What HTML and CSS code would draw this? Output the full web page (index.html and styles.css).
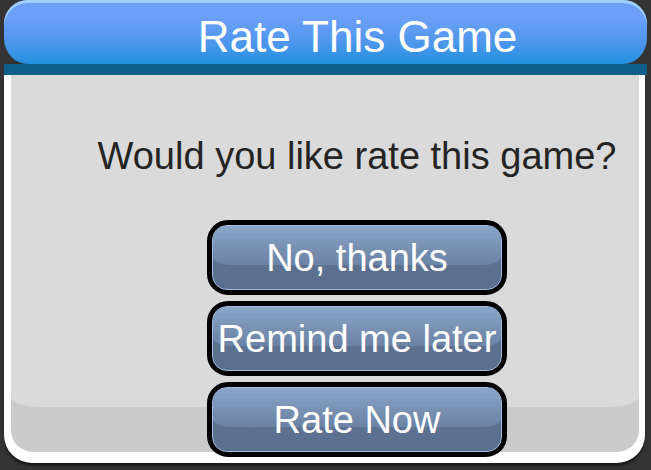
FILE: index.html
```html
<!DOCTYPE html>
<html>
<head>
<meta charset="utf-8">
<link rel="stylesheet" href="styles.css">
</head>
<body>
<div class="dialog">
  <div class="header"><span class="title">Rate This Game</span></div>
  <div class="band"></div>
  <div class="frame">
    <div class="panel">
      <p class="question">Would you like rate this game?</p>
      <div class="buttons">
        <button class="btn"><span class="face"><span class="label">No, thanks</span></span></button>
        <button class="btn"><span class="face"><span class="label">Remind me later</span></span></button>
        <button class="btn"><span class="face"><span class="label">Rate Now</span></span></button>
      </div>
    </div>
  </div>
</div>
</body>
</html>
```
FILE: styles.css
```css
html, body {
  margin: 0;
  padding: 0;
  background: #333333;
  width: 651px;
  height: 470px;
  overflow: hidden;
  font-family: "Liberation Sans", Arial, sans-serif;
}

.dialog {
  margin-left: 4px;
  width: 643px;
  display: flex;
  flex-direction: column;
}

.header {
  height: 64px;
  box-sizing: border-box;
  padding-top: 11px;
  padding-left: 64px;
  display: flex;
  align-items: center;
  justify-content: center;
  border-radius: 24px 24px 24px 24px / 24px 24px 26px 26px;
  background: linear-gradient(#6f9ff9 0%, #6a9ff7 30%, #4f97ec 65%, #2390e0 100%);
  box-shadow: inset 0 3px 0 #9fd0fc;
}

.title {
  color: #ffffff;
  font-size: 44px;
  line-height: 1.15;
}

.band {
  height: 11px;
  background: #0e5f8c;
}

.frame {
  width: 641px;
  background: #ffffff;
  box-sizing: border-box;
  padding: 0 6px 11px 7px;
  border-radius: 0 0 28px 28px;
  box-shadow: 0 3px 2px #1c1c1c;
}

.panel {
  position: relative;
  height: 377px;
  box-sizing: border-box;
  background: #cbcbcb;
  border-radius: 0 0 22px 22px;
  padding: 60px 0 0 64px;
  display: flex;
  flex-direction: column;
  align-items: center;
}

.panel::before {
  content: "";
  position: absolute;
  top: 0;
  left: 0;
  right: 0;
  height: 332px;
  background: #dadada;
  border-radius: 0 0 32px 32px / 0 0 10px 10px;
}

.question {
  position: relative;
  margin: 0;
  font-size: 38px;
  line-height: 1.15;
  color: #242424;
}

.buttons {
  position: relative;
  margin-top: 41px;
  display: flex;
  flex-direction: column;
  gap: 6px;
}

.btn {
  width: 300px;
  height: 75px;
  padding: 0;
  margin: 0;
  border: 5px solid #000000;
  border-radius: 21px;
  background: #000000;
  box-sizing: border-box;
  display: flex;
  font-family: inherit;
  cursor: pointer;
}

.face {
  position: relative;
  flex: 1;
  border: 1px solid #a2bde0;
  border-radius: 15px;
  background: linear-gradient(#617796, #5a6e8d);
  overflow: hidden;
  display: flex;
  align-items: center;
  justify-content: center;
  padding-top: 3px;
}

.face::before {
  content: "";
  position: absolute;
  top: 0;
  left: 0;
  right: 0;
  height: 63%;
  background: linear-gradient(#8ba7cb, #7891b3 55%, #6b83a5);
  border-radius: 0 0 16px 16px / 0 0 9px 9px;
}

.label {
  position: relative;
  color: #ffffff;
  font-size: 38px;
  line-height: 1.15;
  white-space: nowrap;
}
```
